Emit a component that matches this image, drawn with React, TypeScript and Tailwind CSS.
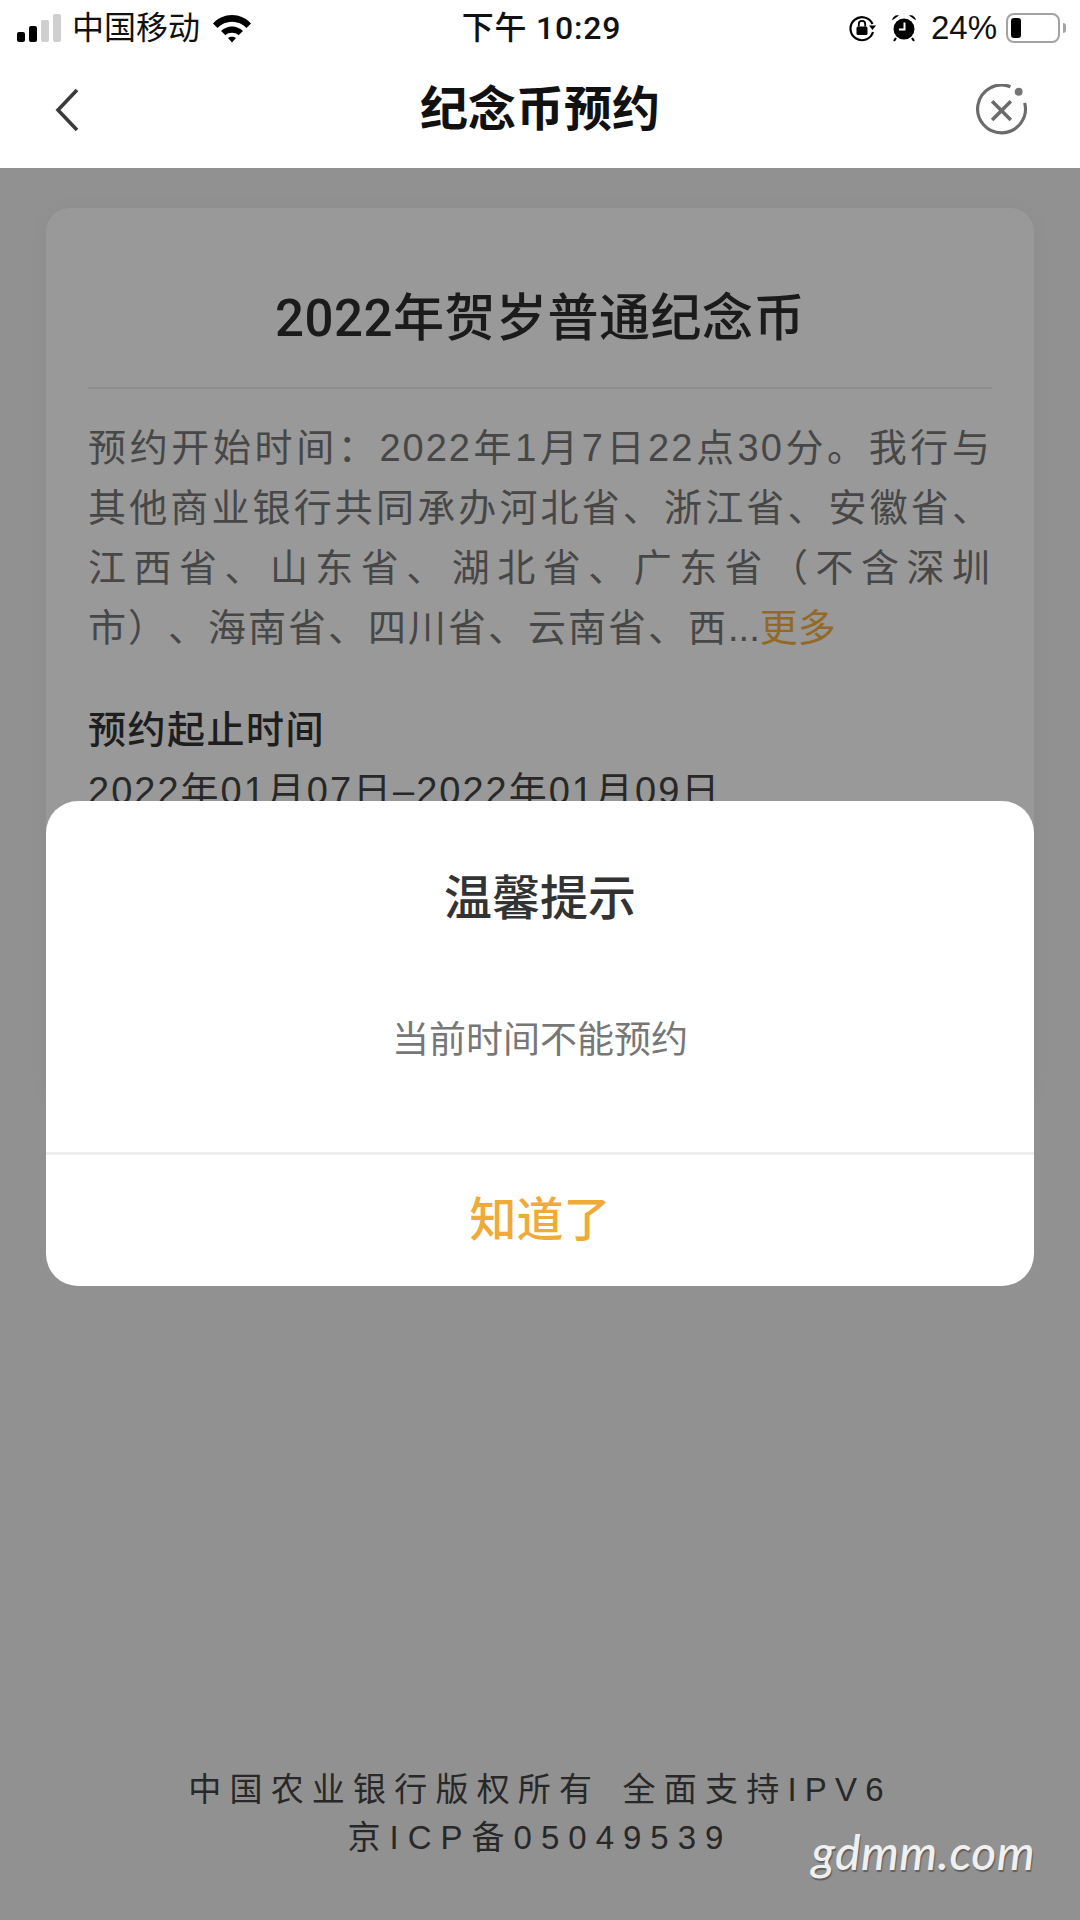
import React from 'react';

const latinCjk = "font-['Liberation_Sans','Noto_Sans_CJK_SC',sans-serif]";
const mediumCjk = "font-['Roboto','Noto_Sans_CJK_SC',sans-serif]";

function SignalBars() {
  return (
    <div className="flex items-end gap-[4px] pb-[1px]">
      <span className="h-[10px] w-[8px] rounded-[2px] bg-black" />
      <span className="h-[16px] w-[8px] rounded-[2px] bg-black" />
      <span className="h-[22px] w-[8px] rounded-[2px] bg-[#cfcfcf]" />
      <span className="h-[28px] w-[8px] rounded-[2px] bg-[#cfcfcf]" />
    </div>
  );
}

function WifiIcon() {
  return (
    <svg width="40" height="30" viewBox="0 0 40 30">
      <path d="M1 10.5 C11-1 29-1 39 10.5 L34.5 15 C26.5 6.5 13.5 6.5 5.5 15 Z" fill="#000" />
      <path d="M9 18 C15 12 25 12 31 18 L26.5 22.2 C23 19 17 19 13.5 22.2 Z" fill="#000" />
      <path d="M16 25 C18 23.4 22 23.4 24 25 L20 29.5 Z" fill="#000" />
    </svg>
  );
}

function LockRotationIcon() {
  return (
    <svg width="28" height="28" viewBox="0 0 28 28">
      <path d="M24.5 10 A11.5 11.5 0 1 0 25 18" fill="none" stroke="#000" strokeWidth="2.2" />
      <path d="M21 11.5 L28 11.5 L24.5 16 Z" fill="#000" />
      <rect x="8.5" y="12.5" width="11" height="8.5" rx="1.5" fill="#000" />
      <path d="M10.8 12.5 V10 a3.2 3.2 0 0 1 6.4 0 V12.5" fill="none" stroke="#000" strokeWidth="1.8" />
    </svg>
  );
}

function AlarmIcon() {
  return (
    <svg width="26" height="28" viewBox="0 0 26 28">
      <circle cx="13" cy="15" r="10.5" fill="#000" />
      <path d="M1 6.5 C1.5 2.5 5 0.5 8 1.5 Z" fill="#000" />
      <path d="M25 6.5 C24.5 2.5 21 0.5 18 1.5 Z" fill="#000" />
      <path d="M5 24 L3 27 M21 24 L23 27" stroke="#000" strokeWidth="2.2" />
      <path d="M13.5 8.5 V15.5 H8" fill="none" stroke="#fff" strokeWidth="2" />
    </svg>
  );
}

function BatteryIcon() {
  return (
    <div className="flex items-center gap-[3px]">
      <div className="flex h-[30px] w-[54px] items-center rounded-[8px] border-2 border-[#a3a3a3] p-[3px]">
        <span className="h-full w-[10px] rounded-[3px] bg-black" />
      </div>
      <span className="h-[10px] w-[3px] rounded-r-full bg-[#a3a3a3]" />
    </div>
  );
}

function CloseMiniIcon() {
  return (
    <svg width="52" height="52" viewBox="0 0 50 50">
      <path d="M35.5 3.6 A23 23 0 1 0 47.5 20.5" fill="none" stroke="#6b6b6b" strokeWidth="3" transform="rotate(-6 25 26)" />
      <circle cx="41" cy="7.5" r="3.8" fill="#757575" />
      <path d="M15.5 16.5 L33.5 34.5 M33.5 16.5 L15.5 34.5" stroke="#6b6b6b" strokeWidth="3.4" />
    </svg>
  );
}

export default function App() {
  return (
    <div className={`relative flex h-[1920px] w-[1080px] flex-col overflow-hidden bg-[#f2f2f2] ${latinCjk} [text-spacing-trim:space-all]`}>
      {/* Status bar */}
      <div className="relative z-20 flex h-[56px] items-center justify-between bg-white pl-[17px] pr-[14px] text-[32px] text-[#111]">
        <div className="flex w-[300px] items-center">
          <SignalBars />
          <span className="ml-[11px]">中国移动</span>
          <span className="ml-[12px]"><WifiIcon /></span>
        </div>
        <div className={`${mediumCjk} font-medium tracking-[0.8px]`}>下午 10:29</div>
        <div className="flex w-[300px] items-center justify-end">
          <LockRotationIcon />
          <span className="ml-[15px]"><AlarmIcon /></span>
          <span className="ml-[14px] text-[33px]">24%</span>
          <span className="ml-[9px]"><BatteryIcon /></span>
        </div>
      </div>

      {/* Nav */}
      <div className="relative z-20 flex h-[112px] items-center justify-between bg-white pb-[4px] pl-[52px] pr-[52px]">
        <div className="w-[60px]">
          <svg width="30" height="46" viewBox="0 0 30 46">
            <path d="M25 3 L6 23 L25 43" fill="none" stroke="#3a3a3a" strokeWidth="3.6" />
          </svg>
        </div>
        <h1 className="text-[48px] font-semibold text-[#111]">纪念币预约</h1>
        <div className="flex w-[60px] justify-end">
          <CloseMiniIcon />
        </div>
      </div>

      {/* Page content */}
      <div className="flex-1 px-[46px] pt-[40px]">
        <div className="h-[900px] rounded-[24px] bg-white px-[42px] shadow-[0_0_20px_rgba(0,0,0,0.04)]">
          <h2 className={`${mediumCjk} flex h-[181px] items-center justify-center border-b-2 border-[#ececec] pt-[44px] text-[51px] font-medium tracking-[0.5px] text-[#2e2e2e]`}>
            2022年贺岁普通纪念币
          </h2>
          <div className="mt-[29px] text-[38px] leading-[60px] tracking-[2px] text-[#777]">
            <p className="[text-align-last:justify]">预约开始时间：2022年1月7日22点30分。我行与</p>
            <p className="[text-align-last:justify]">其他商业银行共同承办河北省、浙江省、安徽省、</p>
            <p className="[text-align-last:justify]">江西省、山东省、湖北省、广东省（不含深圳</p>
            <p>
              市）、海南省、四川省、云南省、西<span className="tracking-[0px]">...</span><span className="tracking-[0px] text-[#f5b041]">更多</span>
            </p>
          </div>
          <h3 className="mt-[42px] text-[38px] font-medium leading-[60px] tracking-[1.5px] text-[#333]">预约起止时间</h3>
          <p className="mt-[1px] text-[38px] leading-[60px] tracking-[2px] text-[#444]">2022年01月07日–2022年01月09日</p>
        </div>
      </div>

      {/* Footer */}
      <div className="absolute bottom-[58px] left-0 right-0 text-center text-[33px] leading-[48px] tracking-[8px] text-[#444]">
        <p className="pl-[0px] tracking-[8.2px]">中国农业银行版权所有&nbsp;<span className="ml-[5px]">全面支持IPV6</span></p>
        <p className="tracking-[9px]">京ICP备05049539</p>
      </div>

      {/* Mask */}
      <div className="absolute inset-x-0 bottom-0 top-[168px] bg-black/40" />

      {/* Dialog */}
      <div className="absolute left-[46px] right-[46px] top-[801px] flex h-[485px] flex-col rounded-[32px] bg-white">
        <h2 className="pt-[68px] text-center text-[48px] font-medium leading-[60px] text-[#333]">温馨提示</h2>
        <p className="mt-[87px] text-center text-[37px] leading-[50px] text-[#777]">当前时间不能预约</p>
        <button className="mt-auto h-[134px] border-t-[3px] border-[#eeeeee] text-[47px] font-medium text-[#efab38]">
          知道了
        </button>
      </div>

      {/* Watermark */}
      <div className="absolute bottom-[32px] right-[45px] font-['Lato',sans-serif] text-[48px] font-medium italic tracking-[0.5px] text-[#f0f0f0] [text-shadow:1px_2px_1px_rgba(0,0,0,0.35)]">
        gdmm.com
      </div>
    </div>
  );
}
